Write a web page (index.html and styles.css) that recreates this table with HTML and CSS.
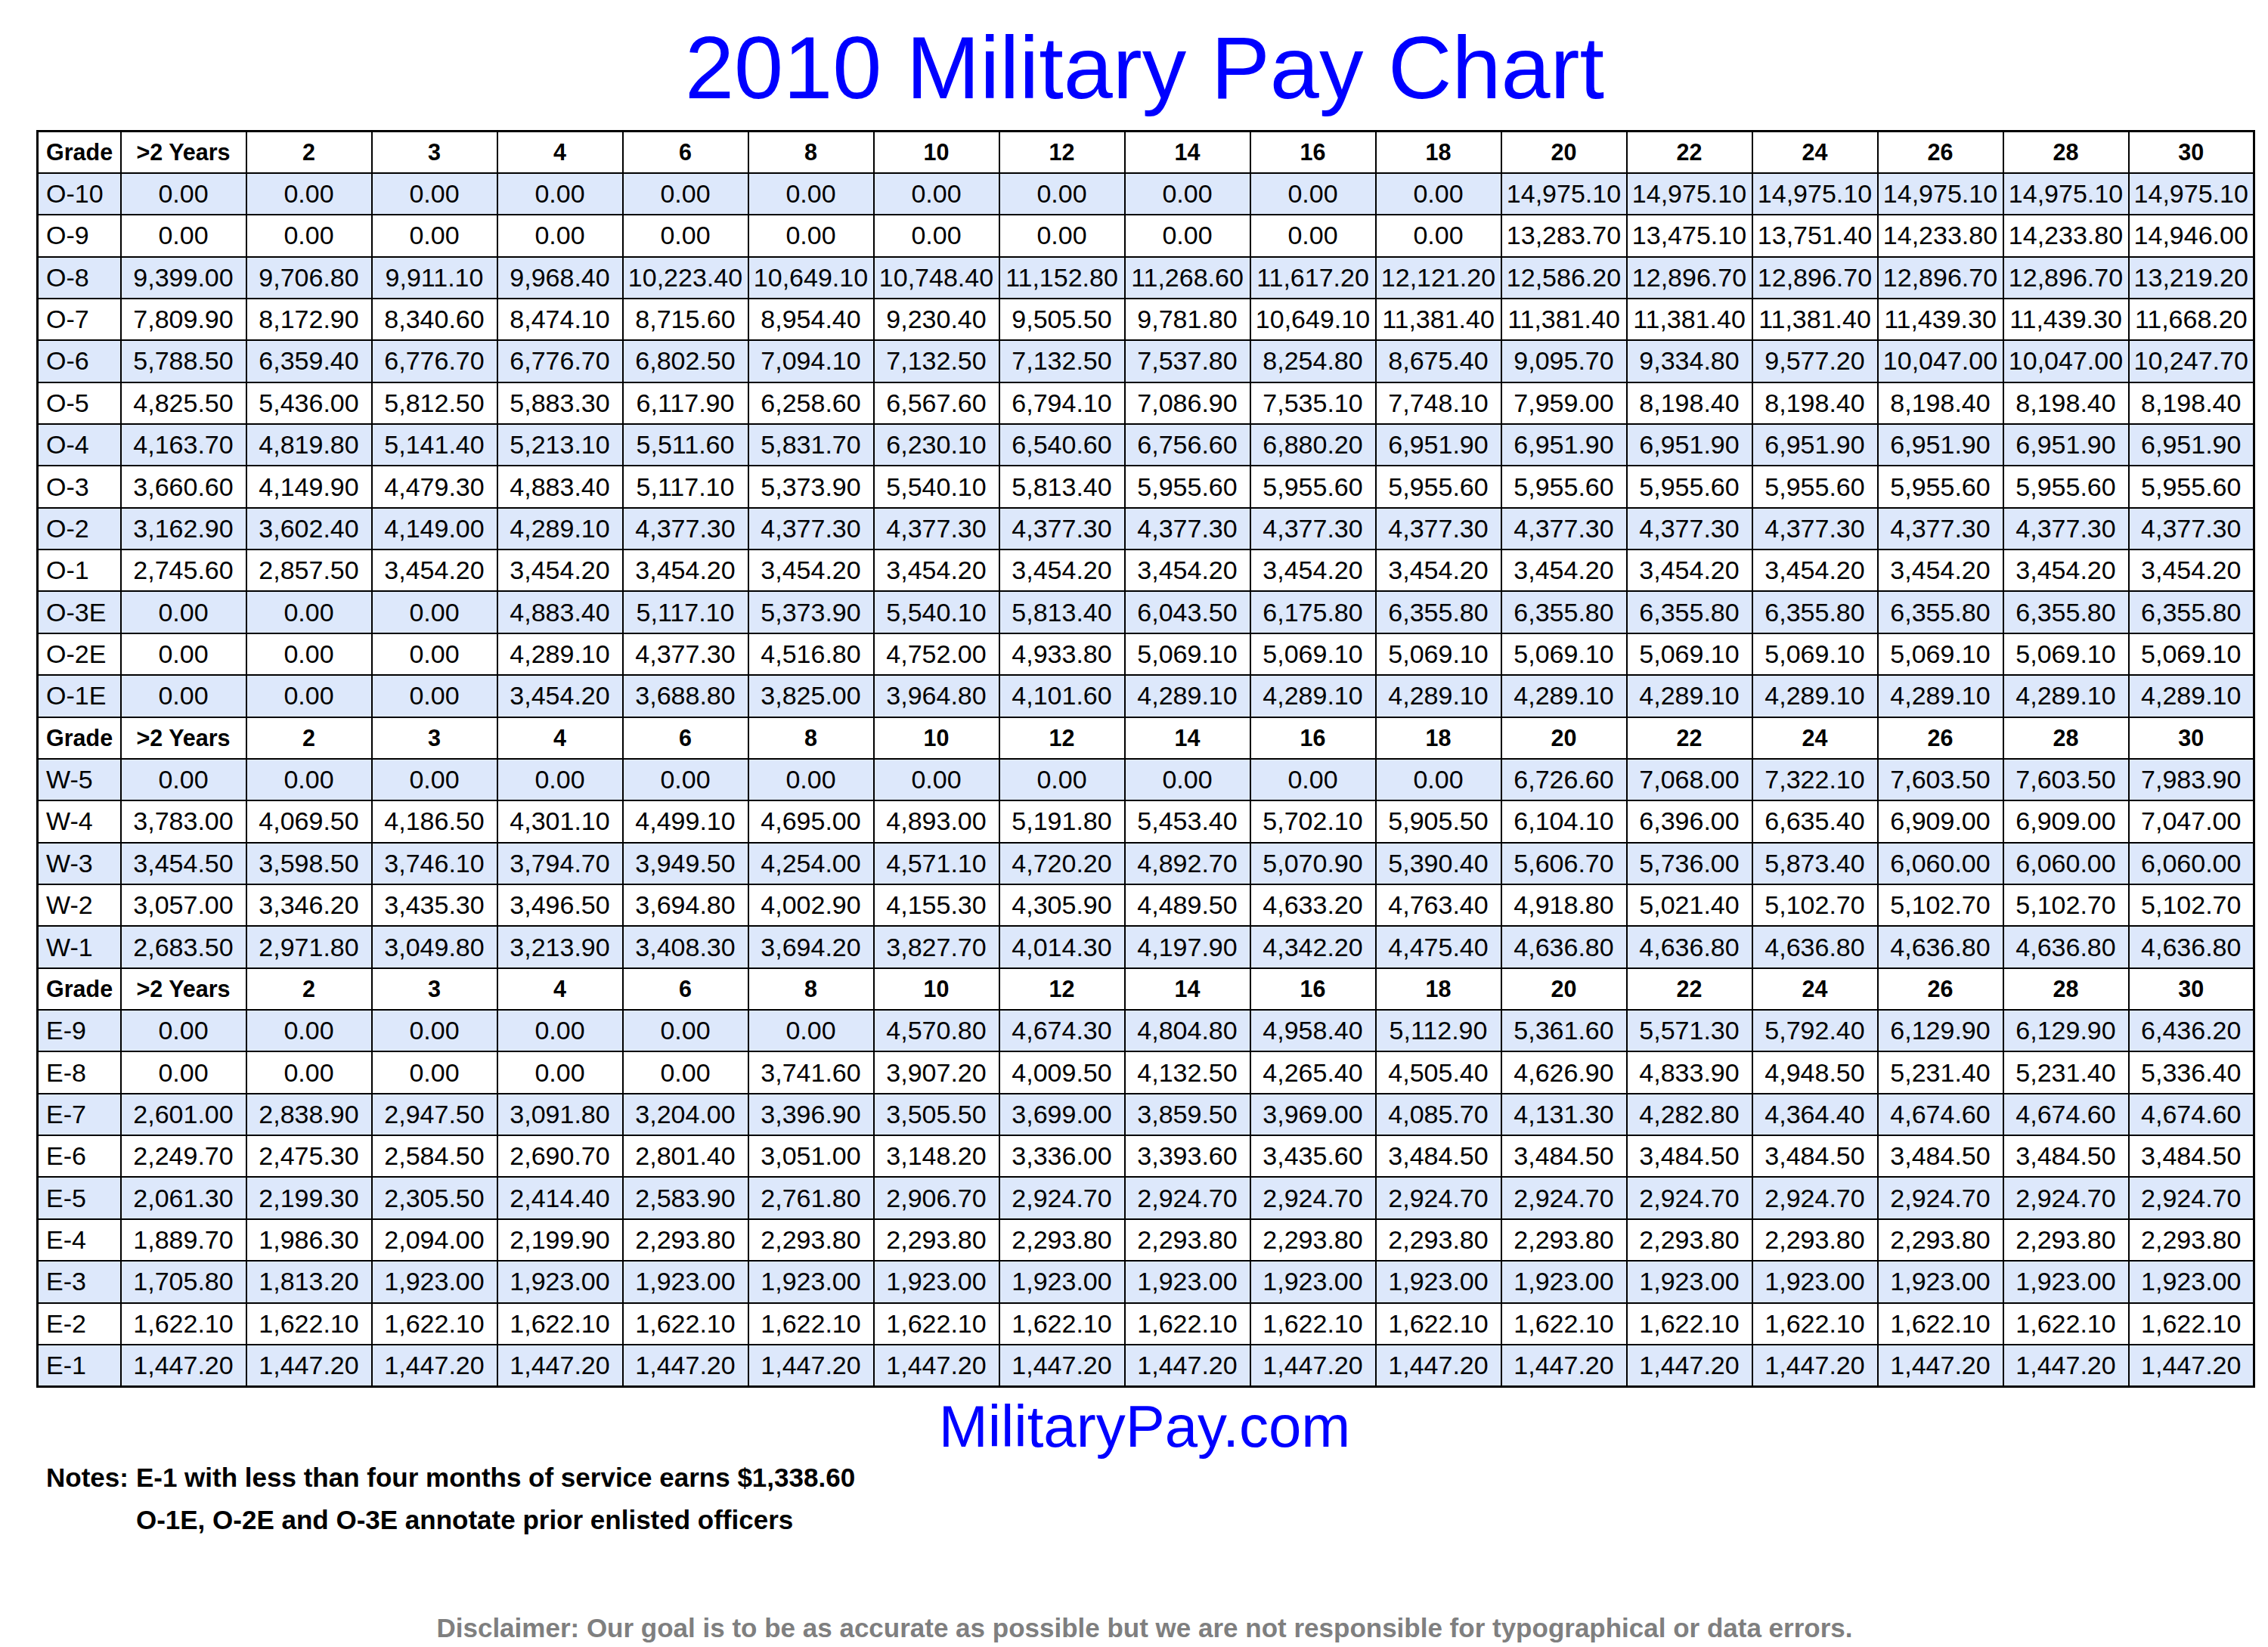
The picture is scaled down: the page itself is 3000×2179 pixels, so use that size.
FILE: index.html
```html
<!DOCTYPE html>
<html lang="en">
<head>
<meta charset="utf-8">
<title>2010 Military Pay Chart</title>
<link rel="stylesheet" href="styles.css">
</head>
<body>
<div class="page">
<h1 class="title">2010 Military Pay Chart</h1>
<table class="pay">
<colgroup><col class="cg"><col span="17" class="cv"></colgroup>
<tbody>
<tr class="h"><td class="g">Grade</td><td>&gt;2 Years</td><td>2</td><td>3</td><td>4</td><td>6</td><td>8</td><td>10</td><td>12</td><td>14</td><td>16</td><td>18</td><td>20</td><td>22</td><td>24</td><td>26</td><td>28</td><td>30</td></tr>
<tr class="b"><td class="g">O-10</td><td>0.00</td><td>0.00</td><td>0.00</td><td>0.00</td><td>0.00</td><td>0.00</td><td>0.00</td><td>0.00</td><td>0.00</td><td>0.00</td><td>0.00</td><td>14,975.10</td><td>14,975.10</td><td>14,975.10</td><td>14,975.10</td><td>14,975.10</td><td>14,975.10</td></tr>
<tr><td class="g">O-9</td><td>0.00</td><td>0.00</td><td>0.00</td><td>0.00</td><td>0.00</td><td>0.00</td><td>0.00</td><td>0.00</td><td>0.00</td><td>0.00</td><td>0.00</td><td>13,283.70</td><td>13,475.10</td><td>13,751.40</td><td>14,233.80</td><td>14,233.80</td><td>14,946.00</td></tr>
<tr class="b"><td class="g">O-8</td><td>9,399.00</td><td>9,706.80</td><td>9,911.10</td><td>9,968.40</td><td>10,223.40</td><td>10,649.10</td><td>10,748.40</td><td>11,152.80</td><td>11,268.60</td><td>11,617.20</td><td>12,121.20</td><td>12,586.20</td><td>12,896.70</td><td>12,896.70</td><td>12,896.70</td><td>12,896.70</td><td>13,219.20</td></tr>
<tr><td class="g">O-7</td><td>7,809.90</td><td>8,172.90</td><td>8,340.60</td><td>8,474.10</td><td>8,715.60</td><td>8,954.40</td><td>9,230.40</td><td>9,505.50</td><td>9,781.80</td><td>10,649.10</td><td>11,381.40</td><td>11,381.40</td><td>11,381.40</td><td>11,381.40</td><td>11,439.30</td><td>11,439.30</td><td>11,668.20</td></tr>
<tr class="b"><td class="g">O-6</td><td>5,788.50</td><td>6,359.40</td><td>6,776.70</td><td>6,776.70</td><td>6,802.50</td><td>7,094.10</td><td>7,132.50</td><td>7,132.50</td><td>7,537.80</td><td>8,254.80</td><td>8,675.40</td><td>9,095.70</td><td>9,334.80</td><td>9,577.20</td><td>10,047.00</td><td>10,047.00</td><td>10,247.70</td></tr>
<tr><td class="g">O-5</td><td>4,825.50</td><td>5,436.00</td><td>5,812.50</td><td>5,883.30</td><td>6,117.90</td><td>6,258.60</td><td>6,567.60</td><td>6,794.10</td><td>7,086.90</td><td>7,535.10</td><td>7,748.10</td><td>7,959.00</td><td>8,198.40</td><td>8,198.40</td><td>8,198.40</td><td>8,198.40</td><td>8,198.40</td></tr>
<tr class="b"><td class="g">O-4</td><td>4,163.70</td><td>4,819.80</td><td>5,141.40</td><td>5,213.10</td><td>5,511.60</td><td>5,831.70</td><td>6,230.10</td><td>6,540.60</td><td>6,756.60</td><td>6,880.20</td><td>6,951.90</td><td>6,951.90</td><td>6,951.90</td><td>6,951.90</td><td>6,951.90</td><td>6,951.90</td><td>6,951.90</td></tr>
<tr><td class="g">O-3</td><td>3,660.60</td><td>4,149.90</td><td>4,479.30</td><td>4,883.40</td><td>5,117.10</td><td>5,373.90</td><td>5,540.10</td><td>5,813.40</td><td>5,955.60</td><td>5,955.60</td><td>5,955.60</td><td>5,955.60</td><td>5,955.60</td><td>5,955.60</td><td>5,955.60</td><td>5,955.60</td><td>5,955.60</td></tr>
<tr class="b"><td class="g">O-2</td><td>3,162.90</td><td>3,602.40</td><td>4,149.00</td><td>4,289.10</td><td>4,377.30</td><td>4,377.30</td><td>4,377.30</td><td>4,377.30</td><td>4,377.30</td><td>4,377.30</td><td>4,377.30</td><td>4,377.30</td><td>4,377.30</td><td>4,377.30</td><td>4,377.30</td><td>4,377.30</td><td>4,377.30</td></tr>
<tr><td class="g">O-1</td><td>2,745.60</td><td>2,857.50</td><td>3,454.20</td><td>3,454.20</td><td>3,454.20</td><td>3,454.20</td><td>3,454.20</td><td>3,454.20</td><td>3,454.20</td><td>3,454.20</td><td>3,454.20</td><td>3,454.20</td><td>3,454.20</td><td>3,454.20</td><td>3,454.20</td><td>3,454.20</td><td>3,454.20</td></tr>
<tr class="b"><td class="g">O-3E</td><td>0.00</td><td>0.00</td><td>0.00</td><td>4,883.40</td><td>5,117.10</td><td>5,373.90</td><td>5,540.10</td><td>5,813.40</td><td>6,043.50</td><td>6,175.80</td><td>6,355.80</td><td>6,355.80</td><td>6,355.80</td><td>6,355.80</td><td>6,355.80</td><td>6,355.80</td><td>6,355.80</td></tr>
<tr><td class="g">O-2E</td><td>0.00</td><td>0.00</td><td>0.00</td><td>4,289.10</td><td>4,377.30</td><td>4,516.80</td><td>4,752.00</td><td>4,933.80</td><td>5,069.10</td><td>5,069.10</td><td>5,069.10</td><td>5,069.10</td><td>5,069.10</td><td>5,069.10</td><td>5,069.10</td><td>5,069.10</td><td>5,069.10</td></tr>
<tr class="b"><td class="g">O-1E</td><td>0.00</td><td>0.00</td><td>0.00</td><td>3,454.20</td><td>3,688.80</td><td>3,825.00</td><td>3,964.80</td><td>4,101.60</td><td>4,289.10</td><td>4,289.10</td><td>4,289.10</td><td>4,289.10</td><td>4,289.10</td><td>4,289.10</td><td>4,289.10</td><td>4,289.10</td><td>4,289.10</td></tr>
<tr class="h"><td class="g">Grade</td><td>&gt;2 Years</td><td>2</td><td>3</td><td>4</td><td>6</td><td>8</td><td>10</td><td>12</td><td>14</td><td>16</td><td>18</td><td>20</td><td>22</td><td>24</td><td>26</td><td>28</td><td>30</td></tr>
<tr class="b"><td class="g">W-5</td><td>0.00</td><td>0.00</td><td>0.00</td><td>0.00</td><td>0.00</td><td>0.00</td><td>0.00</td><td>0.00</td><td>0.00</td><td>0.00</td><td>0.00</td><td>6,726.60</td><td>7,068.00</td><td>7,322.10</td><td>7,603.50</td><td>7,603.50</td><td>7,983.90</td></tr>
<tr><td class="g">W-4</td><td>3,783.00</td><td>4,069.50</td><td>4,186.50</td><td>4,301.10</td><td>4,499.10</td><td>4,695.00</td><td>4,893.00</td><td>5,191.80</td><td>5,453.40</td><td>5,702.10</td><td>5,905.50</td><td>6,104.10</td><td>6,396.00</td><td>6,635.40</td><td>6,909.00</td><td>6,909.00</td><td>7,047.00</td></tr>
<tr class="b"><td class="g">W-3</td><td>3,454.50</td><td>3,598.50</td><td>3,746.10</td><td>3,794.70</td><td>3,949.50</td><td>4,254.00</td><td>4,571.10</td><td>4,720.20</td><td>4,892.70</td><td>5,070.90</td><td>5,390.40</td><td>5,606.70</td><td>5,736.00</td><td>5,873.40</td><td>6,060.00</td><td>6,060.00</td><td>6,060.00</td></tr>
<tr><td class="g">W-2</td><td>3,057.00</td><td>3,346.20</td><td>3,435.30</td><td>3,496.50</td><td>3,694.80</td><td>4,002.90</td><td>4,155.30</td><td>4,305.90</td><td>4,489.50</td><td>4,633.20</td><td>4,763.40</td><td>4,918.80</td><td>5,021.40</td><td>5,102.70</td><td>5,102.70</td><td>5,102.70</td><td>5,102.70</td></tr>
<tr class="b"><td class="g">W-1</td><td>2,683.50</td><td>2,971.80</td><td>3,049.80</td><td>3,213.90</td><td>3,408.30</td><td>3,694.20</td><td>3,827.70</td><td>4,014.30</td><td>4,197.90</td><td>4,342.20</td><td>4,475.40</td><td>4,636.80</td><td>4,636.80</td><td>4,636.80</td><td>4,636.80</td><td>4,636.80</td><td>4,636.80</td></tr>
<tr class="h"><td class="g">Grade</td><td>&gt;2 Years</td><td>2</td><td>3</td><td>4</td><td>6</td><td>8</td><td>10</td><td>12</td><td>14</td><td>16</td><td>18</td><td>20</td><td>22</td><td>24</td><td>26</td><td>28</td><td>30</td></tr>
<tr class="b"><td class="g">E-9</td><td>0.00</td><td>0.00</td><td>0.00</td><td>0.00</td><td>0.00</td><td>0.00</td><td>4,570.80</td><td>4,674.30</td><td>4,804.80</td><td>4,958.40</td><td>5,112.90</td><td>5,361.60</td><td>5,571.30</td><td>5,792.40</td><td>6,129.90</td><td>6,129.90</td><td>6,436.20</td></tr>
<tr><td class="g">E-8</td><td>0.00</td><td>0.00</td><td>0.00</td><td>0.00</td><td>0.00</td><td>3,741.60</td><td>3,907.20</td><td>4,009.50</td><td>4,132.50</td><td>4,265.40</td><td>4,505.40</td><td>4,626.90</td><td>4,833.90</td><td>4,948.50</td><td>5,231.40</td><td>5,231.40</td><td>5,336.40</td></tr>
<tr class="b"><td class="g">E-7</td><td>2,601.00</td><td>2,838.90</td><td>2,947.50</td><td>3,091.80</td><td>3,204.00</td><td>3,396.90</td><td>3,505.50</td><td>3,699.00</td><td>3,859.50</td><td>3,969.00</td><td>4,085.70</td><td>4,131.30</td><td>4,282.80</td><td>4,364.40</td><td>4,674.60</td><td>4,674.60</td><td>4,674.60</td></tr>
<tr><td class="g">E-6</td><td>2,249.70</td><td>2,475.30</td><td>2,584.50</td><td>2,690.70</td><td>2,801.40</td><td>3,051.00</td><td>3,148.20</td><td>3,336.00</td><td>3,393.60</td><td>3,435.60</td><td>3,484.50</td><td>3,484.50</td><td>3,484.50</td><td>3,484.50</td><td>3,484.50</td><td>3,484.50</td><td>3,484.50</td></tr>
<tr class="b"><td class="g">E-5</td><td>2,061.30</td><td>2,199.30</td><td>2,305.50</td><td>2,414.40</td><td>2,583.90</td><td>2,761.80</td><td>2,906.70</td><td>2,924.70</td><td>2,924.70</td><td>2,924.70</td><td>2,924.70</td><td>2,924.70</td><td>2,924.70</td><td>2,924.70</td><td>2,924.70</td><td>2,924.70</td><td>2,924.70</td></tr>
<tr><td class="g">E-4</td><td>1,889.70</td><td>1,986.30</td><td>2,094.00</td><td>2,199.90</td><td>2,293.80</td><td>2,293.80</td><td>2,293.80</td><td>2,293.80</td><td>2,293.80</td><td>2,293.80</td><td>2,293.80</td><td>2,293.80</td><td>2,293.80</td><td>2,293.80</td><td>2,293.80</td><td>2,293.80</td><td>2,293.80</td></tr>
<tr class="b"><td class="g">E-3</td><td>1,705.80</td><td>1,813.20</td><td>1,923.00</td><td>1,923.00</td><td>1,923.00</td><td>1,923.00</td><td>1,923.00</td><td>1,923.00</td><td>1,923.00</td><td>1,923.00</td><td>1,923.00</td><td>1,923.00</td><td>1,923.00</td><td>1,923.00</td><td>1,923.00</td><td>1,923.00</td><td>1,923.00</td></tr>
<tr><td class="g">E-2</td><td>1,622.10</td><td>1,622.10</td><td>1,622.10</td><td>1,622.10</td><td>1,622.10</td><td>1,622.10</td><td>1,622.10</td><td>1,622.10</td><td>1,622.10</td><td>1,622.10</td><td>1,622.10</td><td>1,622.10</td><td>1,622.10</td><td>1,622.10</td><td>1,622.10</td><td>1,622.10</td><td>1,622.10</td></tr>
<tr class="b"><td class="g">E-1</td><td>1,447.20</td><td>1,447.20</td><td>1,447.20</td><td>1,447.20</td><td>1,447.20</td><td>1,447.20</td><td>1,447.20</td><td>1,447.20</td><td>1,447.20</td><td>1,447.20</td><td>1,447.20</td><td>1,447.20</td><td>1,447.20</td><td>1,447.20</td><td>1,447.20</td><td>1,447.20</td><td>1,447.20</td></tr>
</tbody>
</table>
<div class="site">MilitaryPay.com</div>
<div class="notes">
<span class="notes-label">Notes:</span>
<div class="notes-lines">
<div>E-1 with less than four months of service earns $1,338.60</div>
<div>O-1E, O-2E and O-3E annotate prior enlisted officers</div>
</div>
</div>
<div class="disclaimer">Disclaimer: Our goal is to be as accurate as possible but we are not responsible for typographical or data errors.</div>
</div>
</body>
</html>
```
FILE: styles.css
```css
html, body {
  margin: 0;
  padding: 0;
  background: #ffffff;
}

body {
  font-family: "Liberation Sans", Arial, Helvetica, sans-serif;
  color: #000000;
}

.page {
  width: 3000px;
}

.title {
  margin: 31px 0 24px 48px;
  width: 2932px;
  text-align: center;
  font-size: 117px;
  line-height: 117px;
  font-weight: normal;
  color: #0000ff;
}

.pay {
  margin-left: 48px;
  width: 2932px;
  border-collapse: collapse;
  table-layout: fixed;
  border: 3px solid #000000;
}

.cg {
  width: 110px;
}

.cv {
  width: 166px;
}

.pay tr {
  height: 55.37px;
}

.pay td {
  border: 2px solid #000000;
  padding: 0;
  text-align: center;
  vertical-align: middle;
  font-size: 34px;
  white-space: nowrap;
  overflow: hidden;
}

.pay td.g {
  text-align: left;
  padding-left: 10px;
}

.pay tr.h td {
  font-weight: bold;
  font-size: 30.5px;
}

.pay tr.b td {
  background: #dde8fb;
}

.site {
  margin: 12px 0 0 48px;
  width: 2932px;
  text-align: center;
  font-size: 78px;
  line-height: 78px;
  color: #0000ff;
}

.notes {
  margin: 1px 0 0 61px;
  display: flex;
  gap: 10px;
  font-weight: bold;
  font-size: 35px;
  line-height: 56px;
}

.disclaimer {
  margin: 95px 0 0 48px;
  width: 2932px;
  text-align: center;
  font-weight: bold;
  font-size: 35px;
  line-height: 40px;
  color: #7f7f7f;
}
```
